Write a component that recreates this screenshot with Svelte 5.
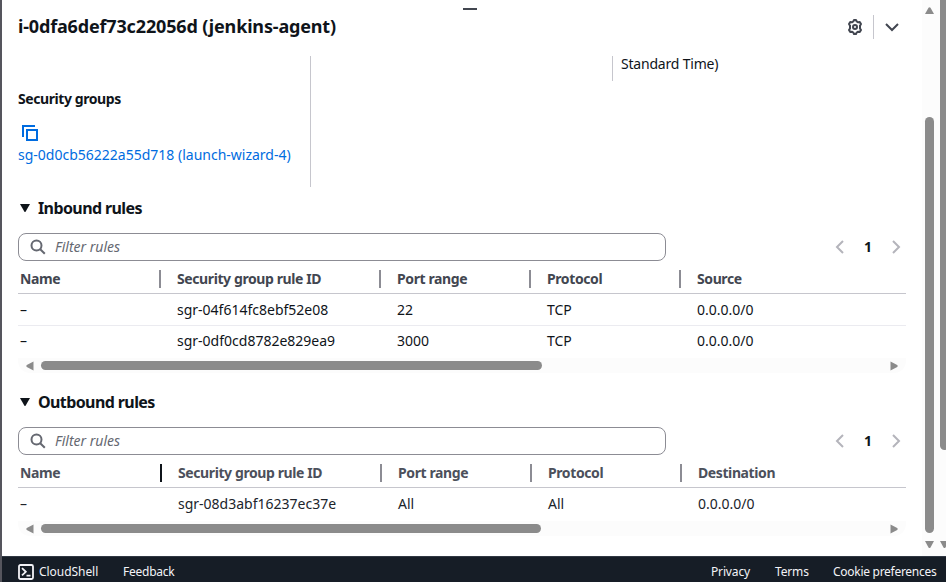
<script>
  const sections = [
    {
      title: 'Inbound rules',
      first: 143,
      columns: ['Name', 'Security group rule ID', 'Port range', 'Protocol', 'Source'],
      rows: [
        ['–', 'sgr-04f614fc8ebf52e08', '22', 'TCP', '0.0.0.0/0'],
        ['–', 'sgr-0df0cd8782e829ea9', '3000', 'TCP', '0.0.0.0/0']
      ],
      thumb: 501,
      active: false
    },
    {
      title: 'Outbound rules',
      first: 144,
      columns: ['Name', 'Security group rule ID', 'Port range', 'Protocol', 'Destination'],
      rows: [['–', 'sgr-08d3abf16237ec37e', 'All', 'All', '0.0.0.0/0']],
      thumb: 500,
      active: true
    }
  ];
</script>

<div class="app">
  <div class="edge"></div>
  <div class="content">
    <div class="upper">
      <main>
        <div class="grip"></div>
        <header>
          <h1>i-0dfa6def73c22056d (jenkins-agent)</h1>
          <div class="tools">
            <svg width="16" height="16" viewBox="0 0 16 16" fill="none" stroke="#424650" stroke-width="2" stroke-linejoin="round">
              <path d="M6.3 2.5 7 1h2l.7 1.5 1.4.8 1.7-.2 1.2 1.9-1 1.6v2.8l1 1.6-1.2 1.9-1.7-.2-1.4.8L9 15H7l-.7-1.5-1.4-.8-1.7.2L2 11l1-1.6V6.6L2 5l1.2-1.9 1.7.2z" />
              <circle cx="8" cy="8" r="2" />
            </svg>
            <i></i>
            <svg width="16" height="16" viewBox="0 0 16 16" fill="none" stroke="#424650" stroke-width="2"><path d="m2 5 6 6 6-6" /></svg>
          </div>
        </header>
        <div class="details">
          <div class="groups">
            <b>Security groups</b>
            <svg width="16" height="16" viewBox="0 0 16 16" fill="none" stroke="#006ce0" stroke-width="2"><path d="M1 12V1h12M5 5h10v10H5z" /></svg>
            <span class="link">sg-0d0cb56222a55d718 (launch-wizard-4)</span>
          </div>
          <div class="blank"></div>
          <div class="time">Standard Time)</div>
        </div>
        {#each sections as s}
          <section class:outbound={s.active}>
            <h2><svg width="10" height="8" viewBox="0 0 10 8"><path d="M0 0h10L5.7 7.4Q5 8.5 4.3 7.4z" fill="#0f141a" /></svg>{s.title}</h2>
            <div class="bar">
              <div class="filter">
                <svg width="16" height="16" viewBox="0 0 16 16" fill="none" stroke="#656871" stroke-width="2"><circle cx="6.5" cy="6.5" r="5" /><path d="m10.2 10.2 4.6 4.6" /></svg>
                <em>Filter rules</em>
              </div>
              <div class="pages">
                <svg width="10" height="14" viewBox="0 0 10 14" fill="none" stroke="#b4b4bb" stroke-width="2"><path d="M8 1 2 7l6 6" /></svg>
                <b>1</b>
                <svg width="10" height="14" viewBox="0 0 10 14" fill="none" stroke="#b4b4bb" stroke-width="2"><path d="m2 1 6 6-6 6" /></svg>
              </div>
            </div>
            <div class="row head" style="grid-template-columns: {s.first}px 220px 150px 150px 1fr">
              {#each s.columns as c}<span>{c}</span>{/each}
            </div>
            {#each s.rows as r}
              <div class="row" style="grid-template-columns: {s.first}px 220px 150px 150px 1fr">
                {#each r as c}<span>{c}</span>{/each}
              </div>
            {/each}
            <div class="hscroll">
              <svg width="8" height="10" viewBox="0 0 8 10"><path d="M7.5.5v9L.8 6Q-.2 5 .8 4z" fill="#8b8b8b" /></svg>
              <div class="thumb" style="width: {s.thumb}px"></div>
              <svg width="8" height="10" viewBox="0 0 8 10"><path d="M.5.5v9L7.2 6Q8.2 5 7.2 4z" fill="#8b8b8b" /></svg>
            </div>
          </section>
        {/each}
      </main>
      <div class="vscroll">
        <svg width="9" height="8" viewBox="0 0 9 8"><path d="M0 7h9L5.5.8Q4.5-.4 3.5.8z" fill="#8b8b8b" /></svg>
        <div class="vthumb"></div>
        <svg width="9" height="8" viewBox="0 0 9 8"><path d="M0 0h9L5.5 6.4Q4.5 7.6 3.5 6.4z" fill="#8b8b8b" /></svg>
      </div>
      <div class="outer">
        <div class="othumb"></div>
        <svg width="9" height="8" viewBox="0 0 9 8"><path d="M0 0h9L5.5 6.4Q4.5 7.6 3.5 6.4z" fill="#8b8b8b" /></svg>
      </div>
    </div>
    <footer>
      <svg width="16" height="16" viewBox="0 0 16 16" fill="none" stroke="#f3f3f7" stroke-width="1.8"><rect x="1" y="1" width="14" height="14" rx="1.5" /><path d="m4 4.2 3.8 3.6L4 11.4M8.5 11.7h4" /></svg>
      <span class="shell">CloudShell</span>
      <span class="feedback">Feedback</span>
      <span class="privacy">Privacy</span>
      <span class="terms">Terms</span>
      <span class="cookies">Cookie preferences</span>
    </footer>
  </div>
</div>

<style>
  :global(body) { margin: 0; overflow: hidden; }
  .app { width: 946px; height: 582px; display: flex; overflow: hidden; background: #fff; color: #0f141a; font: 14px/20px "Noto Sans", "Open Sans", sans-serif; white-space: nowrap; }
  .app * { box-sizing: border-box; }
  svg { display: block; flex: none; }
  .edge { width: 2px; background: #55555d; flex: none; }
  .content { width: 944px; display: flex; flex-direction: column; }
  .upper { height: 556px; display: flex; }
  main { width: 920px; padding: 0 16px; }
  .grip { width: 14px; height: 2px; background: #424650; margin: 8px 0 0 445px; }
  header { display: flex; justify-content: space-between; height: 46px; padding-top: 4px; }
  h1 { margin: 0; font-size: 18px; line-height: 24px; height: 26px; letter-spacing: -0.16px; }
  .tools { display: flex; align-items: center; height: 26px; padding-right: 6px; }
  .tools i { width: 1px; height: 24px; background: #c6c6cd; margin: 0 10px; }
  .details { display: flex; height: 131px; }
  .groups { width: 293px; border-right: 1px solid #c6c6cd; display: flex; flex-direction: column; padding-top: 33px; }
  .groups b { letter-spacing: -0.42px; }
  .groups svg { margin: 16px 0 4px 4px; }
  .link { color: #006ce0; }
  .blank { width: 301px; }
  .time { height: 25px; border-left: 1px solid #c6c6cd; padding-left: 8px; line-height: 15px; letter-spacing: -0.2px; }
  section { height: 194px; padding-top: 11px; }
  h2 { display: flex; align-items: center; gap: 8px; margin: 0; padding-left: 2px; font-size: 16px; line-height: 20px; height: 20px; letter-spacing: -0.6px; }
  .bar { display: flex; height: 28px; margin-top: 15px; }
  .filter { width: 648px; border: 1px solid #8c8c94; border-radius: 8px; display: flex; align-items: center; padding-left: 11px; gap: 9px; color: #656871; }
  .pages { display: flex; align-items: center; justify-content: space-between; width: 66px; margin-left: 169px; }
  .row { display: grid; align-items: center; height: 32px; border-bottom: 1px solid #ebebf0; width: 888px; }
  .row:nth-last-child(2) { border-bottom: 0; height: 31px; padding-bottom: 1px; }
  .row span { padding-left: 16px; }
  .row span:first-child { padding-left: 2px; }
  .head { height: 33px; padding-top: 4px; font-weight: 700; color: #424650; border-color: #c6c6cd; letter-spacing: -0.4px; }
  .head span { height: 18px; line-height: 18px; border-right: 2px solid #8c8c94; }
  .head span:last-child { border: 0; }
  .outbound .head span:first-child { border-color: #0f141a; }
  .outbound .head { color: #4c505b; }
  .outbound .row:not(.head) { color: #20242b; height: 32px; }
  .hscroll { width: 888px; height: 15px; margin-top: 1px; display: flex; align-items: center; background: #fcfcfc; border-radius: 0 0 12px 12px; padding: 0 8px; }
  .thumb { height: 9px; border-radius: 5px; background: #8b8b8b; margin-left: 7px; margin-right: auto; }
  .vscroll { width: 15px; background: #fcfcfc; padding-top: 7px; display: flex; flex-direction: column; align-items: center; }
  .vthumb { width: 9px; height: 416px; border-radius: 5px; background: #8b8b8b; margin: 102px 0 8px; }
  .outer { width: 9px; background: #fcfcfc; padding-left: 3px; overflow: hidden; }
  .othumb { width: 9px; height: 450px; border-radius: 0 0 5px 5px; background: #8b8b8b; margin-bottom: 91px; }
  footer { height: 26px; background: #161d26; border-top: 1px solid #303843; display: flex; align-items: center; color: #f3f3f7; font-size: 12px; padding: 6px 10px 0 16px; }
  footer svg { position: relative; top: -1px; }
  footer span { line-height: 16px; position: relative; top: -1px; }
  .shell { margin-left: 5px; width: 84px; letter-spacing: -0.05px; }
  .feedback { letter-spacing: -0.25px; }
  .privacy { margin-left: auto; width: 64px; letter-spacing: -0.15px; }
  .terms { width: 58px; letter-spacing: -0.15px; }
  .cookies { width: 103px; letter-spacing: -0.28px; }
</style>
